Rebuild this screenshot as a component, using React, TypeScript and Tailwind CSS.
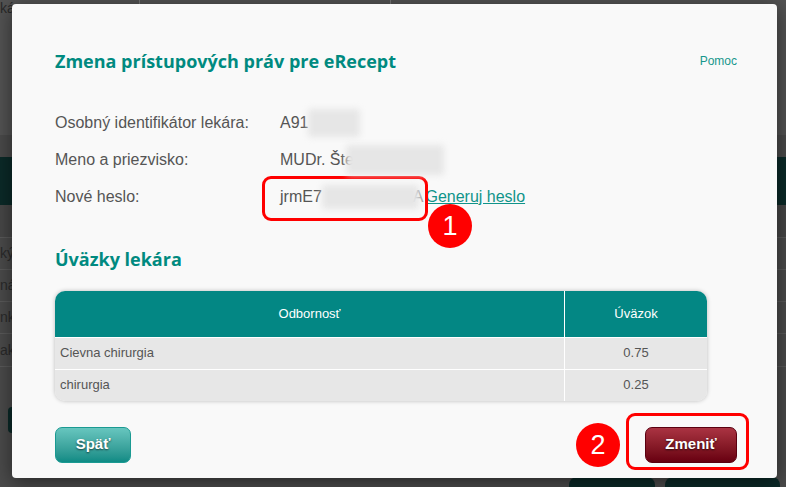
import React from 'react';

const sans = { fontFamily: '"Liberation Sans", Arial, sans-serif' };

function Redact({ w, h }: { w: number; h: number }) {
  return (
    <span
      className="relative z-10 inline-block align-middle rounded-[3px] bg-[#e6e6e6] blur-[3px]"
      style={{ width: w, height: h }}
    />
  );
}

function InfoRow({ label, children }: { label: string; children: React.ReactNode }) {
  return (
    <div className="flex h-[37px] items-center text-[16px] text-[#555]">
      <div className="w-[225px] shrink-0">{label}</div>
      <div className="flex items-center whitespace-nowrap">{children}</div>
    </div>
  );
}

function Badge({ n, className }: { n: string; className: string }) {
  return (
    <div
      className={`absolute flex h-[44px] w-[44px] items-center justify-center rounded-full bg-[#ff0000] text-[27px] text-white ${className}`}
    >
      {n}
    </div>
  );
}

export default function App() {
  return (
    <div className="relative h-[487px] w-[786px] overflow-hidden bg-[#4b4b4b]" style={sans}>
      {/* dimmed page behind the dialog */}
      <div className="flex h-full flex-col">
        <div className="flex h-[135px] items-start bg-[#535353] text-[14px] text-[#2a2a2a]">
          <span className="leading-[16px]">ká</span>
          <div className="ml-[124px] h-[4px] w-px bg-[#777]" />
          <div className="ml-[250px] h-[4px] w-px bg-[#777]" />
        </div>
        <div className="h-[22px] bg-[#4a4a4a]" />
        <div className="h-[48px] bg-[#0b2a28]" />
        <div className="h-[33px] border-b border-[#5a5a5a] bg-[#474747]" />
        <div className="flex h-[32px] items-center border-b border-[#5a5a5a] text-[14px] text-[#2a2a2a]">ký</div>
        <div className="flex h-[32px] items-center border-b border-[#5a5a5a] text-[14px] text-[#2a2a2a]">ná</div>
        <div className="flex h-[32px] items-center border-b border-[#5a5a5a] text-[14px] text-[#2a2a2a]">nka</div>
        <div className="flex h-[33px] items-center border-b border-[#5a5a5a] text-[14px] text-[#2a2a2a]">ak</div>
        <div className="h-[40px]" />
        <div className="ml-[8px] h-[26px] w-[40px] rounded bg-[#0b2a28]" />
        <div className="flex flex-1 items-end justify-end gap-[10px] pr-[6px]">
          <div className="h-[10px] w-[86px] rounded-t-lg bg-[#0b2a28]" />
          <div className="h-[10px] w-[115px] rounded-t-lg bg-[#0b2a28]" />
        </div>
      </div>

      {/* dialog */}
      <div className="absolute left-[12px] top-[4px] h-[474px] w-[765px] rounded-[4px] bg-[#f9f9f9] pl-[43px] pr-[40px] pt-[43px] shadow-[0_4px_20px_rgba(0,0,0,0.5)]">
        <div className="flex h-[28px] items-center justify-between">
          <h1
            className="text-[18px] font-bold text-[#008a80]"
            style={{ fontFamily: '"Open Sans", "Noto Sans", sans-serif' }}
          >
            Zmena prístupových práv pre eRecept
          </h1>
          <a className="text-[12px] text-[#17978c]">Pomoc</a>
        </div>

        <div className="mt-[29.5px]">
          <InfoRow label="Osobný identifikátor lekára:">
            A91
            <Redact w={52} h={28} />
          </InfoRow>
          <InfoRow label="Meno a priezvisko:">
            MUDr. Šte
            <span className="-ml-[8px]">
              <Redact w={98} h={30} />
            </span>
          </InfoRow>
          <InfoRow label="Nové heslo:">
            jrmE7
            <Redact w={97} h={24} />
            <span className="-ml-[6px] text-[#999]">A</span>
            <a className="ml-[2px] text-[#10948a] underline">Generuj heslo</a>
          </InfoRow>
        </div>

        <h2
          className="mt-[30px] flex h-[28px] items-center text-[18px] font-bold text-[#008a80]"
          style={{ fontFamily: '"Open Sans", "Noto Sans", sans-serif' }}
        >
          Úväzky lekára
        </h2>

        <div className="mt-[17px] w-[652px] overflow-hidden rounded-[10px] shadow-[0_0_4px_rgba(0,0,0,0.25)]">
          <div className="flex h-[46px] bg-[#038784] text-[13px] text-white">
            <div className="flex w-[510px] items-center justify-center border-r border-white">Odbornosť</div>
            <div className="flex flex-1 items-center justify-center">Úväzok</div>
          </div>
          {[
            ['Cievna chirurgia', '0.75'],
            ['chirurgia', '0.25'],
          ].map(([o, u]) => (
            <div key={o} className="flex h-[32px] border-t border-white bg-[#e7e7e7] text-[13px] text-[#555]">
              <div className="flex w-[510px] items-center border-r border-white pl-[5px]">{o}</div>
              <div className="flex flex-1 items-center justify-center">{u}</div>
            </div>
          ))}
        </div>

        <div className="mt-[26px] flex items-center justify-between">
          <button className="flex h-[36px] w-[76px] items-center justify-center rounded-[7px] border border-[#1a9a92] bg-gradient-to-b from-[#67c6bf] to-[#0c8b85] text-[15px] font-bold text-white [text-shadow:0_1px_2px_rgba(0,0,0,0.6)]">
            Späť
          </button>
          <button className="flex h-[36px] w-[92px] items-center justify-center rounded-[7px] border border-[#5a0010] bg-gradient-to-b from-[#aa3342] to-[#680010] text-[15px] font-bold text-white [text-shadow:0_1px_2px_rgba(0,0,0,0.7)]">
            Zmeniť
          </button>
        </div>

        {/* annotations */}
        <div className="absolute left-[250px] top-[172px] h-[45px] w-[166px] rounded-[9px] border-[3px] border-[#ff0000]" />
        <Badge n="1" className="left-[416px] top-[200px]" />
        <div className="absolute left-[614px] top-[409px] h-[57px] w-[123px] rounded-[9px] border-[3px] border-[#ff0000]" />
        <Badge n="2" className="left-[564px] top-[419px]" />
      </div>
    </div>
  );
}
